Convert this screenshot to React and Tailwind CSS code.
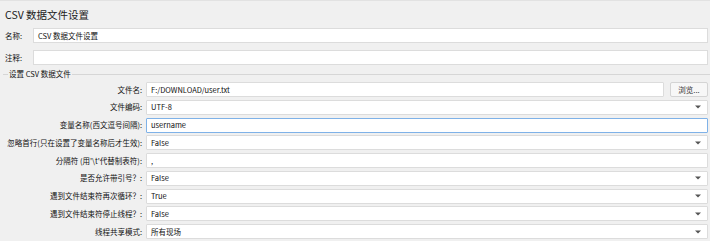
const rows = [
  { label: "文件名:", value: "F:/DOWNLOAD/user.txt", kind: "file" },
  { label: "文件编码:", value: "UTF-8", kind: "select" },
  { label: "变量名称(西文逗号间隔):", value: "username", kind: "focus" },
  { label: "忽略首行(只在设置了变量名称后才生效):", value: "False", kind: "select" },
  { label: "分隔符 (用'\\t'代替制表符):", value: ",", kind: "text" },
  { label: "是否允许带引号？:", value: "False", kind: "select" },
  { label: "遇到文件结束符再次循环？:", value: "True", kind: "select" },
  { label: "遇到文件结束符停止线程？:", value: "False", kind: "select" },
  { label: "线程共享模式:", value: "所有现场", kind: "select" },
]

function Arrow() {
  return (
    <svg width="6" height="4" viewBox="0 0 6 4" className="mr-[6px] shrink-0">
      <path d="M0 0.5 H6 L3 3.5 Z" fill="#555" />
    </svg>
  )
}

function Field({ row }) {
  const border = row.kind === "focus" ? "border-[#7fb2e8] border-[1.5px]" : "border-[#dcdcdc] border"
  return (
    <div className="flex-1 h-full flex items-center gap-[6px] min-w-0">
      <div className={`flex-1 h-full bg-white ${border} rounded-[1px] flex items-center justify-between pl-[4px]`}>
        <span className="whitespace-nowrap leading-[12px]">{row.value}</span>
        {row.kind === "select" && <Arrow />}
      </div>
      {row.kind === "file" && (
        <button className="w-[38px] h-full bg-[#f7f7f7] border border-[#d4d4d4] rounded-[2px] flex items-center justify-center text-[#333] leading-[12px]">
          浏览...
        </button>
      )}
    </div>
  )
}

export default function App() {
  return (
    <div
      className="w-[710px] h-[241px] overflow-hidden bg-[#f0f0f0] border-t border-[#e2e2e2] text-[7.5px] leading-[12px] text-[#111]"
      style={{ fontFamily: '"Noto Sans CJK SC", "Noto Sans", sans-serif' }}
    >
      <div className="h-[27px] flex items-center pl-[5px] text-[10.5px] text-[#222]">CSV 数据文件设置</div>

      <div className="flex flex-col gap-[7px] pr-[2px]">
        <div className="flex h-[15px] items-center">
          <span className="w-[33px] pl-[5px] shrink-0">名称:</span>
          <div className="flex-1 h-full bg-white border border-[#dcdcdc] flex items-center pl-[4px]">CSV 数据文件设置</div>
        </div>
        <div className="flex h-[15px] items-center">
          <span className="w-[33px] pl-[5px] shrink-0">注释:</span>
          <div className="flex-1 h-full bg-white border border-[#dcdcdc]" />
        </div>
      </div>

      <div className="flex items-center mt-[3px] h-[12px] pl-[3px]">
        <div className="w-[5px] h-px bg-[#d6d6d6]" />
        <span className="px-[1px]">设置 CSV 数据文件</span>
        <div className="flex-1 h-px bg-[#d6d6d6]" />
      </div>

      <div className="flex flex-col gap-[2.75px] mt-[2px] pr-[2px]">
        {rows.map((row) => (
          <div key={row.label} className="flex h-[15px] items-center">
            <span className="w-[143px] shrink-0 text-right pr-[1px] whitespace-nowrap">{row.label}</span>
            <div className="w-[3px] shrink-0" />
            <Field row={row} />
          </div>
        ))}
      </div>
    </div>
  )
}
